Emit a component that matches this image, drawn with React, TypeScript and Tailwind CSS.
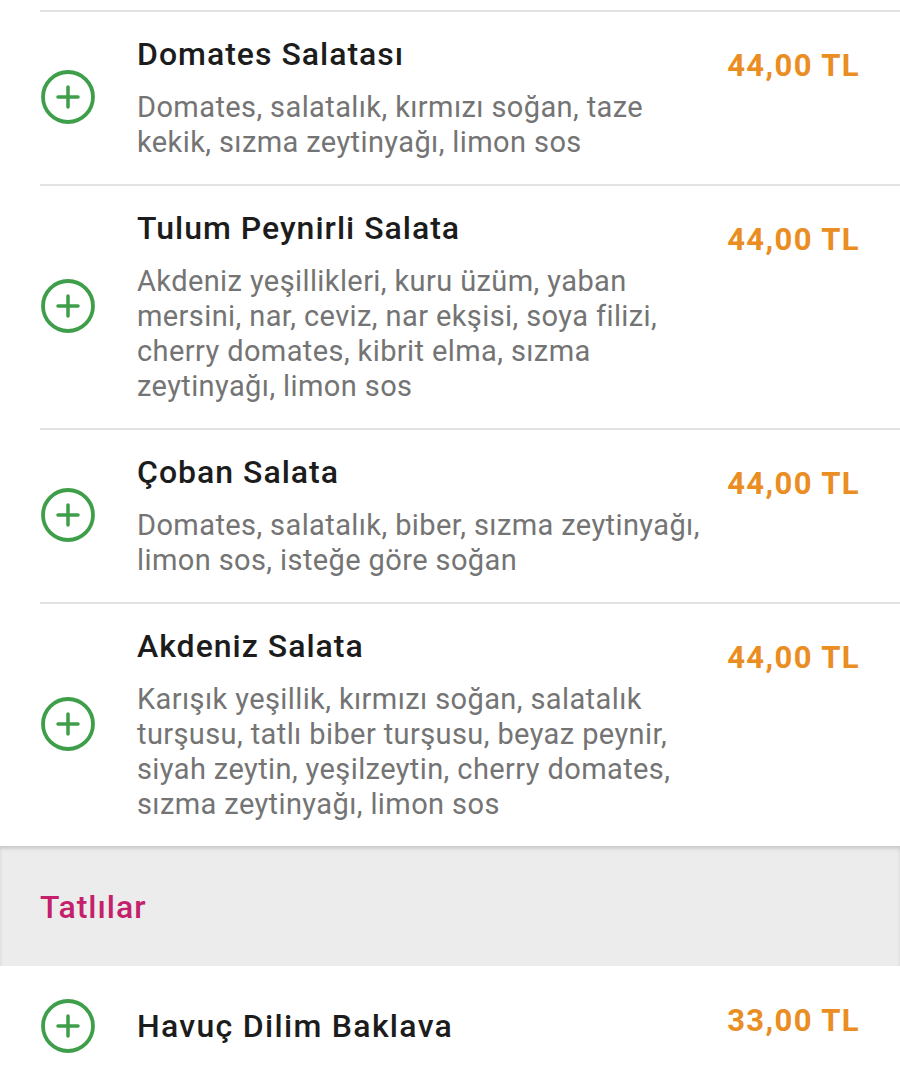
import React from 'react';

type Item = {
  name: string;
  price: string;
  lines: string[];
};

const salads: Item[] = [
  {
    name: 'Domates Salatası',
    price: '44,00 TL',
    lines: ['Domates, salatalık, kırmızı soğan, taze', 'kekik, sızma zeytinyağı, limon sos'],
  },
  {
    name: 'Tulum Peynirli Salata',
    price: '44,00 TL',
    lines: [
      'Akdeniz yeşillikleri, kuru üzüm, yaban',
      'mersini, nar, ceviz, nar ekşisi, soya filizi,',
      'cherry domates, kibrit elma, sızma',
      'zeytinyağı, limon sos',
    ],
  },
  {
    name: 'Çoban Salata',
    price: '44,00 TL',
    lines: ['Domates, salatalık, biber, sızma zeytinyağı,', 'limon sos, isteğe göre soğan'],
  },
  {
    name: 'Akdeniz Salata',
    price: '44,00 TL',
    lines: [
      'Karışık yeşillik, kırmızı soğan, salatalık',
      'turşusu, tatlı biber turşusu, beyaz peynir,',
      'siyah zeytin, yeşilzeytin, cherry domates,',
      'sızma zeytinyağı, limon sos',
    ],
  },
];

function AddIcon() {
  return (
    <svg width="56" height="56" viewBox="0 0 56 56" className="block">
      <circle cx="28" cy="28" r="25" fill="none" stroke="#3f9e4a" strokeWidth="3.8" />
      <path d="M28 18v20M18 28h20" stroke="#3f9e4a" strokeWidth="3.5" strokeLinecap="round" />
    </svg>
  );
}

function MenuRow({ item }: { item: Item }) {
  return (
    <div className="ml-10 flex border-t-2 border-[#e2e2e2] pr-10 pt-[21px] pb-[24px]">
      <div className="w-[97px] shrink-0 self-center">
        <AddIcon />
      </div>
      <div className="flex-1">
        <h3 className="text-[32px] leading-[42px] font-medium tracking-[1px] text-[#1c1c1c]">{item.name}</h3>
        <div className="mt-[15px] text-[29px] leading-[35px] tracking-[0.4px] text-[#747474]">
          {item.lines.map((l) => (
            <div key={l} className="whitespace-nowrap">{l}</div>
          ))}
        </div>
      </div>
      <div className="mt-[13px] text-[31px] leading-[40px] font-bold tracking-[1.4px] text-[#ea8d22] whitespace-nowrap">
        {item.price}
      </div>
    </div>
  );
}

export default function App() {
  return (
    <div className="w-[900px] h-[1083px] overflow-hidden bg-white" style={{ fontFamily: 'Roboto, "Noto Sans", sans-serif' }}>
      <div className="h-[10px]" />
      {salads.map((item) => (
        <MenuRow key={item.name} item={item} />
      ))}

      <div className="h-[120px] flex items-center bg-[#ececec] pl-10 pt-[2px] shadow-[inset_0_3px_4px_-1px_rgba(0,0,0,0.18)]">
        <h2 className="text-[32px] font-medium tracking-[1px] text-[#c4206b]">Tatlılar</h2>
      </div>

      <div className="ml-10 flex h-[120px] items-center pr-10">
        <div className="w-[97px] shrink-0">
          <AddIcon />
        </div>
        <h3 className="flex-1 text-[32px] leading-[42px] font-medium tracking-[1.3px] text-[#1c1c1c]">Havuç Dilim Baklava</h3>
        <div className="-mt-[10px] text-[31px] leading-[40px] font-bold tracking-[1.4px] text-[#ea8d22]">33,00 TL</div>
      </div>
    </div>
  );
}
